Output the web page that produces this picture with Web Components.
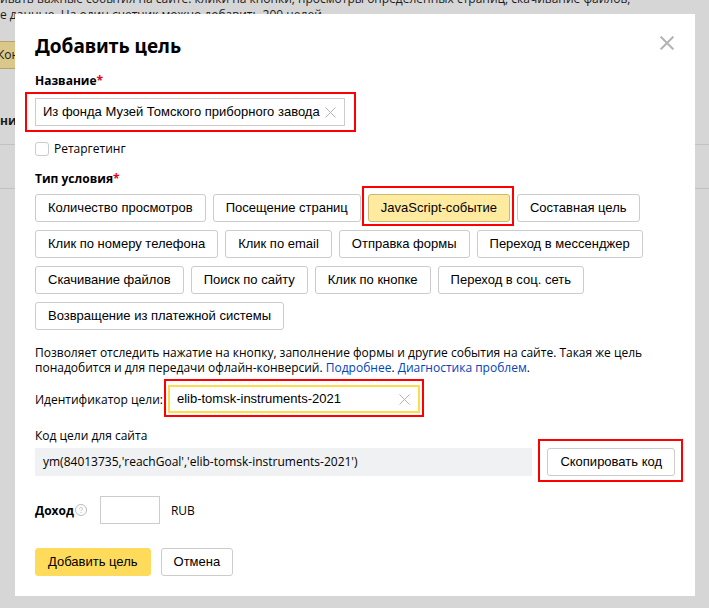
<!DOCTYPE html>
<html lang="ru">
<head>
<meta charset="utf-8">
<title>Добавить цель</title>
<style>
  body { margin: 0; background: #d6d6d6; color: #000; font: 12px/15px "Open Sans", "Noto Sans", sans-serif; }
</style>
</head>
<body>
<goal-page></goal-page>
<script>
const define = (name, html, setup) => {
  const template = document.createElement('template');
  template.innerHTML = html;
  customElements.define(name, class extends HTMLElement {
    constructor() {
      super();
      this.attachShadow({ mode: 'open' }).append(template.content.cloneNode(true));
    }
    connectedCallback() {
      if (setup) setup(this, this.shadowRoot);
    }
  });
};

/* Red outline drawn around the control it wraps */
define('red-frame', `
  <style>
    :host { display: block; position: relative; width: fit-content; }
    :host::after {
      content: ""; position: absolute; pointer-events: none; border: 2px solid #f00;
      inset: var(--frame, -6px);
    }
  </style>
  <slot></slot>`);

define('ui-button', `
  <style>
    :host { display: block; }
    button {
      display: block; height: 28px; padding: 0 12px; border: 1px solid #ccc; border-radius: 3px;
      background: #fff; color: #000; font: 13px/26px "Liberation Sans", Arial, sans-serif; white-space: nowrap;
    }
    :host([checked]) button { background: #ffeba0; border-color: #ccb871; }
    :host([action]) button { background: #ffdb5c; border-color: #ffdb5c; }
  </style>
  <button type="button"><slot></slot></button>`, (host, root) => {
    if (host.hasAttribute('checked')) root.querySelector('button').setAttribute('aria-pressed', 'true');
  });

define('cross-button', `
  <style>
    :host { display: block; line-height: 0; }
    button { padding: 0; border: 0; background: none; }
    svg { display: block; width: var(--cross, 11px); height: var(--cross, 11px); }
  </style>
  <button type="button"><svg viewBox="0 0 11 11" fill="none" stroke="#b3b3b3"><path d="M.5.5l10 10M10.5.5l-10 10"/></svg></button>`,
  (host, root) => {
    root.querySelector('button').setAttribute('aria-label', host.getAttribute('label'));
    root.querySelector('path').setAttribute('stroke-width', host.getAttribute('weight') || '1');
  });

define('text-field', `
  <style>
    :host { display: flex; flex-direction: column; gap: 10px; }
    :host([inline]) { flex-direction: row; align-items: center; gap: 5px; }
    label { font-weight: 700; }
    :host([inline]) label { font-weight: 400; }
    .star { color: #e60014; }
    .box {
      display: flex; align-items: center; box-sizing: border-box; height: 28px; width: var(--width, 310px);
      border: 1px solid #ccc; background: #fff; padding: 0 8px 0 7px;
    }
    :host([active]) .box { border: 2px solid #ffdb4d; }
    input {
      flex: 1; min-width: 0; padding: 0; border: 0; outline: 0; background: none; color: #000;
      font: 13px/24px "Liberation Sans", Arial, sans-serif;
    }
  </style>
  <label for="field"><slot></slot><span class="star"></span></label>
  <red-frame>
    <div class="box"><input id="field" type="text"><cross-button label="Очистить"></cross-button></div>
  </red-frame>`, (host, root) => {
    root.querySelector('input').value = host.getAttribute('value') || '';
    if (host.hasAttribute('required')) root.querySelector('.star').textContent = '*';
  });

define('check-box', `
  <style>
    :host { display: block; }
    label { display: flex; align-items: center; gap: 5px; width: fit-content; }
    input { appearance: none; margin: 0; box-sizing: border-box; width: 14px; height: 14px; border: 1px solid #ccc; border-radius: 3px; background: #fff; }
  </style>
  <label><input type="checkbox"><slot></slot></label>`);

define('condition-list', `
  <style>
    :host { display: block; }
    h2 { margin: 0 0 8px; font: inherit; font-weight: 700; }
    span { color: #e60014; }
    .row { display: flex; flex-wrap: wrap; gap: 8px 7px; }
    red-frame { --frame: -8px -4px -4px -6px; }
  </style>
  <h2>Тип условия<span>*</span></h2>
  <div class="row">
    <ui-button>Количество просмотров</ui-button>
    <ui-button>Посещение страниц</ui-button>
    <red-frame><ui-button checked>JavaScript-событие</ui-button></red-frame>
    <ui-button>Составная цель</ui-button>
    <ui-button>Клик по номеру телефона</ui-button>
    <ui-button>Клик по email</ui-button>
    <ui-button>Отправка формы</ui-button>
    <ui-button>Переход в мессенджер</ui-button>
    <ui-button>Скачивание файлов</ui-button>
    <ui-button>Поиск по сайту</ui-button>
    <ui-button>Клик по кнопке</ui-button>
    <ui-button>Переход в соц. сеть</ui-button>
    <ui-button>Возвращение из платежной системы</ui-button>
  </div>`);

define('goal-code', `
  <style>
    :host { display: block; }
    .row { display: flex; gap: 15px; margin-top: 5px; }
    output { flex: 1; padding: 0 8px; background: #f0f1f3; line-height: 28px; }
    red-frame { --frame: -9px -8px -6px -9px; }
  </style>
  <div>Код цели для сайта</div>
  <div class="row">
    <output>ym(84013735,'reachGoal','elib-tomsk-instruments-2021')</output>
    <red-frame><ui-button>Скопировать код</ui-button></red-frame>
  </div>`);

define('income-field', `
  <style>
    :host { display: flex; align-items: center; }
    label { font-weight: 700; }
    svg { width: 12px; height: 12px; margin: 0 13px 0 1px; }
    input { box-sizing: border-box; width: 60px; height: 28px; margin: 0 11px 0 0; padding: 0 7px; border: 1px solid #ccc; font: 13px "Liberation Sans", Arial, sans-serif; }
  </style>
  <label for="income">Доход</label>
  <svg viewBox="0 0 12 12" fill="none" stroke="#bbb"><circle cx="6" cy="6" r="5.5"/><path d="M4.5 4.9c0-2 3-2 3 0 0 1-1.5 1-1.5 2.2M6 8v1"/></svg>
  <input id="income" type="text"><span>RUB</span>`);

/* Dimmed counter settings behind the dialog */
define('page-backdrop', `
  <style>
    :host { display: block; position: absolute; inset: 0; overflow: hidden; color: #1a1a1a; white-space: nowrap; }
    p { margin: -9px 0 0; line-height: 16px; }
    button { display: block; height: 28px; margin: 18px 0 44px -16px; padding: 0 12px; border: 1px solid #b8a464; background: #d9c88a; color: inherit; font: 12px/26px "Open Sans", sans-serif; }
    th { padding: 0 0 16px; text-align: left; font-weight: 700; line-height: 15px; }
    table { width: 100%; border-collapse: collapse; }
    tr { border-bottom: 1px solid #c2c2c2; }
    td { height: 43px; padding: 0; }
  </style>
  <p>ивать важные события на сайте: клики на кнопки, просмотры определенных страниц, скачивание файлов,<br>е данные. На один счетчик можно добавить 200 целей</p>
  <button type="button">Конверсии</button>
  <table><tr><th>ние</th></tr><tr><td></td></tr></table>`);

define('goal-dialog', `
  <style>
    :host { display: block; position: relative; background: #fff; padding: 20px; }
    header { display: flex; justify-content: space-between; align-items: center; margin-bottom: 15px; }
    header cross-button { --cross: 14px; margin: -6px 1px 0 0; }
    h1 { margin: 0; font: 700 19px/24px "Noto Sans", "Open Sans", sans-serif; }
    form { display: flex; flex-direction: column; }
    .name { --frame: -6px -11px -6px -10px; }
    check-box { margin: 15px 0; }
    p { margin: 15px 0 10px; }
    a { color: #04b; text-decoration: none; }
    .id { --width: 252px; --frame: -6px -4px -4px -4px; }
    goal-code { margin: 15px 0 20px; }
    footer { display: flex; gap: 10px; margin-top: 24px; }
  </style>
  <header><h1>Добавить цель</h1><cross-button label="Закрыть" weight="1.6"></cross-button></header>
  <form>
    <text-field class="name" required value="Из фонда Музей Томского приборного завода">Название</text-field>
    <check-box>Ретаргетинг</check-box>
    <condition-list></condition-list>
    <p>Позволяет отследить нажатие на кнопку, заполнение формы и другие события на сайте. Такая же цель понадобится и для передачи офлайн-конверсий. <a href="#more">Подробнее</a>. <a href="#help">Диагностика проблем</a>.</p>
    <text-field class="id" inline active value="elib-tomsk-instruments-2021">Идентификатор цели:</text-field>
    <goal-code></goal-code>
    <income-field></income-field>
    <footer><ui-button action>Добавить цель</ui-button><ui-button>Отмена</ui-button></footer>
  </form>`);

define('goal-page', `
  <style>
    :host { display: block; position: relative; box-sizing: border-box; min-height: 100vh; padding: 14px 14px 12px 15px; }
  </style>
  <page-backdrop></page-backdrop>
  <goal-dialog role="dialog" aria-label="Добавить цель"></goal-dialog>`);
</script>
</body>
</html>
